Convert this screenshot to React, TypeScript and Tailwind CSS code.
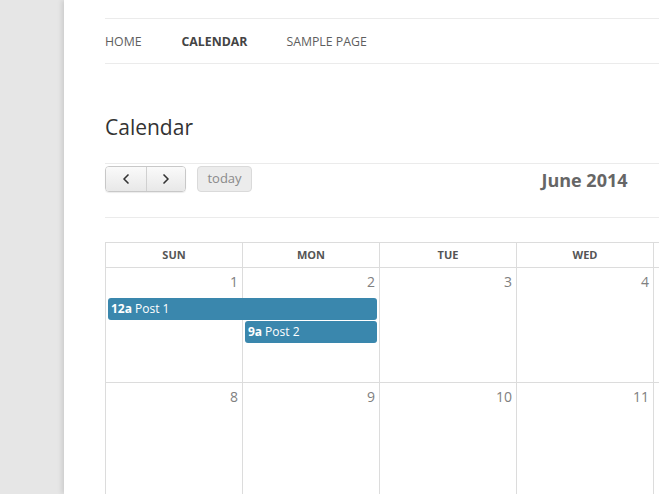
import { ChevronLeft, ChevronRight } from "lucide-react";

// only the columns that fall inside the 659px viewport are drawn
const days = ["Sun", "Mon", "Tue", "Wed"];
const weeks = [
  [1, 2, 3, 4],
  [8, 9, 10, 11],
];

export default function App() {
  return (
    <div className="flex h-[494px] w-[659px] overflow-hidden bg-[#e6e6e6] font-['Open_Sans',sans-serif]">
      <div className="w-[64px] shrink-0" />
      <div className="relative flex-1 overflow-hidden bg-white pl-[41px] shadow-[-2px_0_5px_rgba(0,0,0,0.12)]">
        <div className="w-[959px]">
          <nav className="mt-[18px] flex h-[46px] items-center border-y border-[#ebebeb] pt-[2px] text-[12.3px] uppercase text-[#5e5e5e]">
            <span>Home</span>
            <span className="ml-[40px] font-bold text-[#444]">Calendar</span>
            <span className="ml-[39px]">Sample Page</span>
          </nav>

          <h1 className="mt-[48px] text-[21px] leading-[30px] text-[#333]">Calendar</h1>

          <div className="relative mt-[21px] h-[55px] border-y border-[#ebebeb]">
            <div className="flex items-start gap-[11px] pt-[2px]">
              <div className="flex h-[26px] overflow-hidden rounded-[4px] border border-[#c8c8c8] shadow-[0_1px_1px_rgba(0,0,0,0.08)]">
                <button className="flex w-[40px] items-center justify-center bg-gradient-to-b from-[#fafafa] to-[#e8e8e8] text-[#333]">
                  <ChevronLeft size={16} strokeWidth={2.5} />
                </button>
                <button className="flex w-[39px] items-center justify-center border-l border-[#d0d0d0] bg-gradient-to-b from-[#fafafa] to-[#e8e8e8] text-[#333]">
                  <ChevronRight size={16} strokeWidth={2.5} />
                </button>
              </div>
              <button className="h-[26px] w-[55px] rounded-[4px] border border-[#dadada] bg-[#ececec] text-[13px] text-[#8a8a8a]">
                today
              </button>
            </div>
            <div className="absolute left-0 right-0 top-[2px] text-center text-[18px] font-bold leading-[28px] text-[#666]">
              June 2014
            </div>
          </div>

          <div className="mt-[24px] border-t border-[#dcdcdc]">
            <div className="grid grid-cols-[repeat(7,137px)]">
              {days.map((d) => (
                <div
                  key={d}
                  className="h-[25px] border-b border-l border-[#dcdcdc] text-center text-[11px] font-bold uppercase leading-[24px] text-[#555]"
                >
                  {d}
                </div>
              ))}
              <div className="h-[25px] border-b border-l border-[#dcdcdc]" />
            </div>

            {weeks.map((week, wi) => (
              <div key={wi} className="grid h-[115px] grid-cols-[repeat(7,137px)] grid-rows-[30px_23px_23px_1fr]">
                {week.map((n, i) => (
                  <div
                    key={n}
                    style={{ gridColumnStart: i + 1 }}
                    className="row-span-4 row-start-1 border-b border-l border-[#dcdcdc] pr-[4px] pt-[4px] text-right text-[14px] leading-[20px] text-[#808080]"
                  >
                    {n}
                  </div>
                ))}
                <div className="col-start-5 row-span-4 row-start-1 border-b border-l border-[#dcdcdc]" />
                {wi === 0 && (
                  <>
                    <div className="col-span-2 col-start-1 row-start-2 mb-[1px] ml-[3px] mr-[2px] flex items-center rounded-[3px] bg-[#3a87ad] px-[3px] text-[12px] text-white">
                      <span className="mr-[3px] font-bold">12a</span>Post 1
                    </div>
                    <div className="col-start-2 row-start-3 mb-[1px] ml-[3px] mr-[2px] flex items-center rounded-[3px] bg-[#3a87ad] px-[3px] text-[12px] text-white">
                      <span className="mr-[3px] font-bold">9a</span>Post 2
                    </div>
                  </>
                )}
              </div>
            ))}
          </div>
        </div>
      </div>
    </div>
  );
}
